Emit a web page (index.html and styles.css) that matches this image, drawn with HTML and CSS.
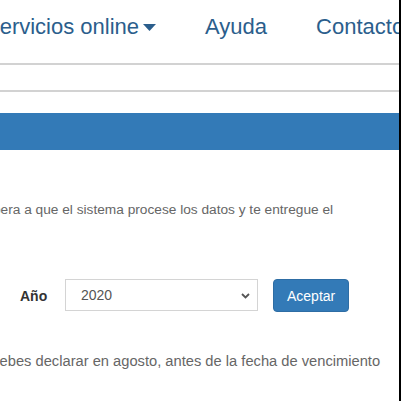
FILE: index.html
```html
<!DOCTYPE html>
<html lang="es">
<head>
  <meta charset="UTF-8" />
  <meta name="viewport" content="width=device-width, initial-scale=1.0"/>
  <title>Declaración anual</title>
  <link rel="stylesheet" href="styles.css">
</head>
<body>
  <div class="pagina">
    <nav class="menu">
      <a href="#" class="menu-item">Servicios online
        <svg class="caret" width="13" height="7" viewBox="0 0 13 7"><path d="M0 0 H13 L6.5 7 Z" fill="currentColor"/></svg>
      </a>
      <a href="#" class="menu-item">Ayuda</a>
      <a href="#" class="menu-item">Contacto</a>
    </nav>

    <div class="buscador"></div>

    <div class="barra"></div>

    <p class="texto texto-espera">Espera a que el sistema procese los datos y te entregue el</p>

    <form class="formulario" onsubmit="return false">
      <label for="anio">Año</label>
      <div class="select-wrap">
        <select id="anio">
          <option>2020</option>
          <option>2019</option>
          <option>2018</option>
        </select>
        <svg class="chevron" width="9" height="6" viewBox="0 0 9 6"><path d="M1 1 L4.5 4.5 L8 1" fill="none" stroke="#555" stroke-width="1.8"/></svg>
      </div>
      <button type="submit" class="btn-aceptar">Aceptar</button>
    </form>

    <p class="texto texto-agosto">Debes declarar en agosto, antes de la fecha de vencimiento</p>
  </div>
</body>
</html>
```

FILE: styles.css
```css
:root {
  --azul: #337ab7;
  --azul-borde: #2e6da4;
  --azul-menu: #2b5e8c;
  --gris-texto: #666;
  --gris-linea: #d2d2d2;
}

* {
  box-sizing: border-box;
}

html, body {
  margin: 0;
  padding: 0;
  background: #fff;
  font-family: "Liberation Sans", Arial, sans-serif;
}

.pagina {
  width: 401px;
  height: 401px;
  overflow: hidden;
  border-right: 2px solid #000;
}

.menu {
  display: flex;
  align-items: flex-start;
  gap: 49px;
  height: 63px;
  padding-top: 14px;
  margin-left: -15px;
  white-space: nowrap;
}

.menu-item {
  font-size: 22px;
  line-height: 26px;
  color: var(--azul-menu);
  text-decoration: none;
  display: flex;
  align-items: center;
}

.caret {
  margin-left: 4px;
  margin-top: 1px;
}

.buscador {
  height: 29px;
  border-top: 2px solid var(--gris-linea);
  border-bottom: 2px solid var(--gris-linea);
}

.barra {
  margin-top: 21px;
  height: 37px;
  background-color: var(--azul);
}

.texto {
  margin: 0;
  font-size: 14px;
  line-height: 20px;
  color: var(--gris-texto);
  white-space: nowrap;
}

.texto-espera {
  margin-top: 50px;
  margin-left: -23px;
  font-size: 13.7px;
}

.formulario {
  display: flex;
  align-items: center;
  margin-top: 59px;
  margin-left: 20px;
  height: 33px;
}

.formulario label {
  font-size: 14px;
  font-weight: 700;
  color: #333;
  width: 45px;
}

.select-wrap {
  position: relative;
  width: 193px;
  height: 32px;
  margin-top: -1px;
}

.select-wrap select {
  appearance: none;
  -webkit-appearance: none;
  width: 100%;
  height: 100%;
  padding: 0 15px;
  border: 1px solid #d4d4d4;
  border-radius: 0;
  background: #fff;
  font-family: inherit;
  font-size: 14px;
  color: #555;
}

.chevron {
  position: absolute;
  right: 8px;
  top: 14px;
  pointer-events: none;
}

.btn-aceptar {
  margin-left: 15px;
  height: 33px;
  padding: 0 13px;
  background-color: var(--azul);
  border: 1px solid var(--azul-borde);
  border-radius: 4px;
  color: #fff;
  font-family: inherit;
  font-size: 14px;
}

.texto-agosto {
  margin-top: 39px;
  margin-left: -11px;
  font-size: 14.7px;
}
```
